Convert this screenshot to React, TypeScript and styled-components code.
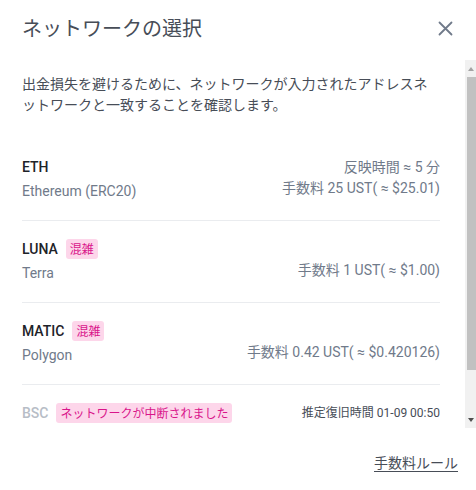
import React from "react";
import styled, { createGlobalStyle } from "styled-components";

const Global = createGlobalStyle`
  html, body { margin: 0; padding: 0; background: #ffffff; }
  body {
    font-family: "Roboto", "Noto Sans CJK JP", sans-serif;
    -webkit-font-smoothing: antialiased;
  }
`;

const Dialog = styled.div`
  width: 476px;
  height: 490px;
  display: flex;
  flex-direction: column;
  background: #ffffff;
  overflow: hidden;
`;

const Header = styled.div`
  height: 60px;
  box-sizing: border-box;
  padding: 16px 23px 0 22px;
  display: flex;
  justify-content: space-between;
  align-items: flex-start;
`;

const Title = styled.h1`
  margin: 0;
  font-family: "Noto Sans CJK JP", sans-serif;
  font-weight: 400;
  font-size: 20px;
  line-height: 24px;
  color: #474d57;
`;

const CloseButton = styled.button`
  border: none;
  background: none;
  padding: 0;
  margin-top: 5px;
  width: 15px;
  height: 15px;
  display: flex;
  cursor: pointer;
`;

const Body = styled.div`
  height: 368px;
  display: flex;
`;

const ScrollContent = styled.div`
  flex: 1;
  min-width: 0;
  overflow: hidden;
  box-sizing: border-box;
  padding: 13px 25px 0 22px;
`;

const ScrollTrack = styled.div`
  width: 11px;
  display: flex;
  flex-direction: column;
  background: #f1f1f1;
`;

const ScrollArrow = styled.div<{ $down?: boolean }>`
  height: 17px;
  display: flex;
  align-items: center;
  justify-content: center;
  margin-top: ${(p) => (p.$down ? "auto" : "0")};
  &::after {
    content: "";
    width: 0;
    height: 0;
    border-left: 3.5px solid transparent;
    border-right: 3.5px solid transparent;
    ${(p) =>
      p.$down
        ? "border-top: 4px solid #505050;"
        : "border-bottom: 4px solid #a3a3a3;"}
  }
`;

const ScrollThumb = styled.div`
  height: 293px;
  margin-left: 2px;
  background: #c1c1c1;
`;

const Description = styled.p`
  margin: 0 0 24px 0;
  font-family: "Noto Sans CJK JP", sans-serif;
  font-size: 14px;
  line-height: 21px;
  color: #474d57;
`;

const NetworkRow = styled.div<{ $last?: boolean }>`
  display: flex;
  flex-direction: column;
  gap: 2px;
  padding: 17px 0 18px;
  border-bottom: ${(p) => (p.$last ? "none" : "1px solid #eaecef")};
`;

const Line = styled.div<{ $top?: boolean }>`
  display: flex;
  justify-content: space-between;
  align-items: ${(p) => (p.$top ? "center" : "flex-start")};
  min-height: 22px;
`;

const NameGroup = styled.div`
  display: flex;
  align-items: center;
  gap: 8px;
`;

const Symbol = styled.span<{ $disabled?: boolean }>`
  font-size: 14px;
  font-weight: 500;
  line-height: 22px;
  color: ${(p) => (p.$disabled ? "#b7bdc6" : "#1e2329")};
`;

const Badge = styled.span`
  display: inline-block;
  height: 20px;
  line-height: 20px;
  padding: 0 4px;
  border-radius: 3px;
  background: #fdd6ea;
  color: #d9158a;
  font-family: "Noto Sans CJK JP", sans-serif;
  font-size: 12px;
`;

const NetworkName = styled.span<{ $disabled?: boolean }>`
  font-size: 14px;
  line-height: 22px;
  color: ${(p) => (p.$disabled ? "#b7bdc6" : "#707a8a")};
`;

const RightText = styled.span<{ $dark?: boolean; $small?: boolean }>`
  font-size: ${(p) => (p.$small ? "12px" : "14px")};
  line-height: 16px;
  color: ${(p) => (p.$dark ? "#474d57" : "#707a8a")};
  white-space: nowrap;
`;

const Footer = styled.div`
  flex: 1;
  display: flex;
  justify-content: flex-end;
  align-items: flex-start;
  padding: 24px 18px 0 0;
`;

const RuleLink = styled.a`
  font-family: "Noto Sans CJK JP", sans-serif;
  font-size: 14px;
  line-height: 20px;
  color: #474d57;
  text-decoration: underline;
  text-underline-offset: 3px;
  cursor: pointer;
`;

type Network = {
  symbol: string;
  name: string;
  badge?: string;
  time?: string;
  fee?: string;
  disabled?: boolean;
};

const networks: Network[] = [
  { symbol: "ETH", name: "Ethereum (ERC20)", time: "反映時間 ≈ 5 分", fee: "手数料 25 UST( ≈ $25.01)" },
  { symbol: "LUNA", name: "Terra", badge: "混雑", fee: "手数料 1 UST( ≈ $1.00)" },
  { symbol: "MATIC", name: "Polygon", badge: "混雑", fee: "手数料 0.42 UST( ≈ $0.420126)" },
  {
    symbol: "BSC",
    name: "Binance Smart Chain",
    badge: "ネットワークが中断されました",
    time: "推定復旧時間 01-09 00:50",
    disabled: true,
  },
];

export default function App() {
  return (
    <>
      <Global />
      <Dialog>
        <Header>
          <Title>ネットワークの選択</Title>
          <CloseButton aria-label="close">
            <svg width="15" height="15" viewBox="0 0 15 15">
              <path d="M1.5 1.5 L13.5 13.5 M13.5 1.5 L1.5 13.5" stroke="#707a8a" strokeWidth="1.8" strokeLinecap="round" />
            </svg>
          </CloseButton>
        </Header>
        <Body>
          <ScrollContent>
            <Description>
              出金損失を避けるために、ネットワークが入力されたアドレスネットワークと一致することを確認します。
            </Description>
            {networks.map((n, i) => (
              <NetworkRow key={n.symbol} $last={i === networks.length - 1}>
                <Line $top>
                  <NameGroup>
                    <Symbol $disabled={n.disabled}>{n.symbol}</Symbol>
                    {n.badge && <Badge>{n.badge}</Badge>}
                  </NameGroup>
                  {n.time && (
                    <RightText $dark={n.disabled} $small={n.disabled}>
                      {n.time}
                    </RightText>
                  )}
                </Line>
                <Line>
                  <NetworkName $disabled={n.disabled}>{n.name}</NetworkName>
                  {n.fee && <RightText>{n.fee}</RightText>}
                </Line>
              </NetworkRow>
            ))}
          </ScrollContent>
          <ScrollTrack aria-hidden>
            <ScrollArrow />
            <ScrollThumb />
            <ScrollArrow $down />
          </ScrollTrack>
        </Body>
        <Footer>
          <RuleLink>手数料ルール</RuleLink>
        </Footer>
      </Dialog>
    </>
  );
}
